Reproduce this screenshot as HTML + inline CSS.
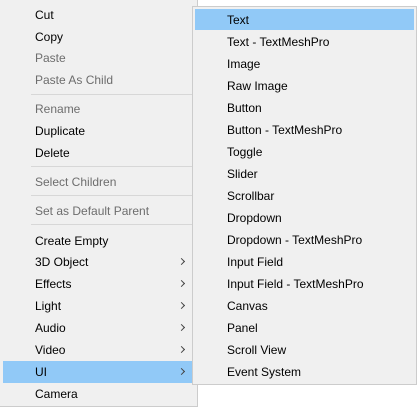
<!DOCTYPE html>
<html><head><meta charset="utf-8"><style>
body{margin:0;width:417px;height:408px;background:#fff;overflow:hidden;position:relative;font-family:"Liberation Sans",sans-serif;font-size:12px;}
.m{position:absolute;background:#f0f0f0;border:1px solid #cccccc;box-sizing:border-box}
.i{position:absolute;height:22px;line-height:24px;color:#000;white-space:nowrap}
.d{color:#6d6d6d}
.s{position:absolute;height:1px;background:#d7d7d7}
.h{position:absolute;background:#91c9f7}
.a{position:absolute;width:4px;height:4px;border-right:1.3px solid #444;border-top:1.3px solid #444;transform:rotate(45deg)}
</style></head><body>
<div class="m" style="left:-1px;top:-1px;width:199px;height:408px"></div>
<div class="h" style="left:3px;top:361px;width:189px;height:22px"></div>
<div class="i" style="left:35px;top:3px">Cut</div>
<div class="i" style="left:35px;top:25px">Copy</div>
<div class="i d" style="left:35px;top:46px">Paste</div>
<div class="i d" style="left:35px;top:68px">Paste As Child</div>
<div class="s" style="left:31px;top:94px;width:162px"></div>
<div class="i d" style="left:35px;top:97px">Rename</div>
<div class="i" style="left:35px;top:119px">Duplicate</div>
<div class="i" style="left:35px;top:141px">Delete</div>
<div class="s" style="left:31px;top:166px;width:162px"></div>
<div class="i d" style="left:35px;top:170px">Select Children</div>
<div class="s" style="left:31px;top:195px;width:162px"></div>
<div class="i d" style="left:35px;top:199px">Set as Default Parent</div>
<div class="s" style="left:31px;top:224px;width:162px"></div>
<div class="i" style="left:35px;top:229px">Create Empty</div>
<div class="i" style="left:35px;top:250px">3D Object</div>
<div class="i" style="left:35px;top:272px">Effects</div>
<div class="i" style="left:35px;top:294px">Light</div>
<div class="i" style="left:35px;top:316px">Audio</div>
<div class="i" style="left:35px;top:338px">Video</div>
<div class="i" style="left:35px;top:360px">UI</div>
<div class="i" style="left:35px;top:382px">Camera</div>
<div class="a" style="left:179px;top:259px"></div>
<div class="a" style="left:179px;top:281px"></div>
<div class="a" style="left:179px;top:303px"></div>
<div class="a" style="left:179px;top:325px"></div>
<div class="a" style="left:179px;top:347px"></div>
<div class="a" style="left:179px;top:369px"></div>
<div class="m" style="left:192px;top:6px;width:225px;height:379px"></div>
<div class="h" style="left:195px;top:9px;width:219px;height:21px"></div>
<div class="i" style="left:227px;top:8px">Text</div>
<div class="i" style="left:227px;top:30px">Text - TextMeshPro</div>
<div class="i" style="left:227px;top:52px">Image</div>
<div class="i" style="left:227px;top:74px">Raw Image</div>
<div class="i" style="left:227px;top:96px">Button</div>
<div class="i" style="left:227px;top:118px">Button - TextMeshPro</div>
<div class="i" style="left:227px;top:140px">Toggle</div>
<div class="i" style="left:227px;top:162px">Slider</div>
<div class="i" style="left:227px;top:184px">Scrollbar</div>
<div class="i" style="left:227px;top:206px">Dropdown</div>
<div class="i" style="left:227px;top:228px">Dropdown - TextMeshPro</div>
<div class="i" style="left:227px;top:250px">Input Field</div>
<div class="i" style="left:227px;top:272px">Input Field - TextMeshPro</div>
<div class="i" style="left:227px;top:294px">Canvas</div>
<div class="i" style="left:227px;top:316px">Panel</div>
<div class="i" style="left:227px;top:338px">Scroll View</div>
<div class="i" style="left:227px;top:360px">Event System</div>
</body></html>
